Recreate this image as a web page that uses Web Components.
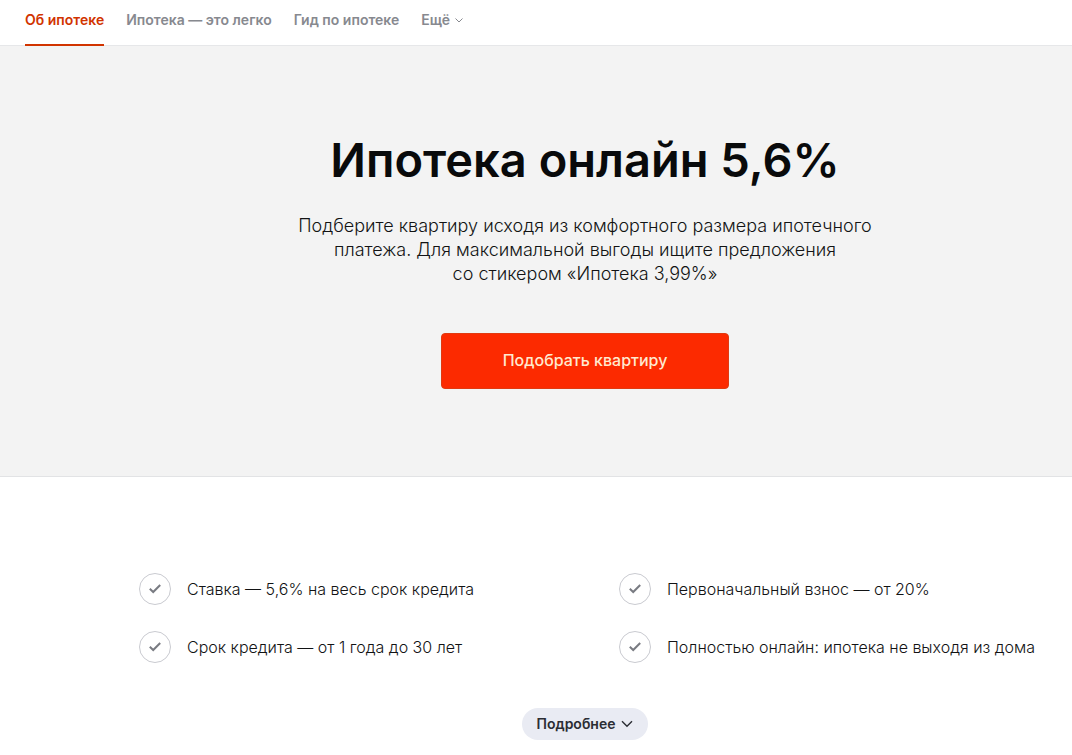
<!DOCTYPE html>
<html lang="ru">
<head>
    <meta charset="UTF-8">
    <meta name="viewport" content="width=device-width, initial-scale=1">
    <title>Ипотека онлайн</title>
    <style>
        body {
            margin: 0;
            background-color: #fff;
            color: #121314;
            font-family: Inter, "Liberation Sans", sans-serif;
            --side: 98px;
        }
    </style>
</head>

<body>
<page-nav>
    <nav-tab href="#about" active>Об ипотеке</nav-tab>
    <nav-tab href="#easy">Ипотека — это легко</nav-tab>
    <nav-tab href="#guide">Гид по ипотеке</nav-tab>
    <nav-more>Ещё</nav-more>
</page-nav>

<main>
    <promo-hero>
        <span slot="title">Ипотека онлайн 5,6%</span>
        Подберите квартиру исходя из комфортного размера ипотечного<br>
        платежа. Для максимальной выгоды ищите предложения<br>
        со стикером «Ипотека 3,99%»
        <span slot="action">Подобрать квартиру</span>
    </promo-hero>

    <benefit-list>
        <benefit-item>Ставка — 5,6% на весь срок кредита</benefit-item>
        <benefit-item>Первоначальный взнос — от 20%</benefit-item>
        <benefit-item>Срок кредита — от 1 года до 30 лет</benefit-item>
        <benefit-item>Полностью онлайн: ипотека не выходя из дома</benefit-item>
        <details-button slot="more">Подробнее</details-button>
    </benefit-list>
</main>

<script>


  class PageNav extends HTMLElement {
    constructor() {
      super();
      this.attachShadow({mode: "open"});
      this.shadowRoot.innerHTML = `
        <style>
          :host {
            display: block;
            border-bottom: 1px solid #e6e7e9;
          }
          nav {
            display: flex;
            gap: 22px;
            height: 45px;
            padding: 0 25px;
          }
        </style>
        <nav><slot></slot></nav>`;
    }
  }

  class NavTab extends HTMLElement {
    constructor() {
      super();
      this.attachShadow({mode: "open"});
      this.shadowRoot.innerHTML = `
        <style>
          :host { display: block; }
          a {
            display: block;
            box-sizing: border-box;
            height: 46px;
            padding-top: 10px;
            color: #87898f;
            font-size: 14px;
            font-weight: 600;
            line-height: 20px;
            white-space: nowrap;
            text-decoration: none;
          }
          :host([active]) a {
            color: #d13400;
            border-bottom: 2px solid #d13400;
          }
        </style>
        <a><slot></slot></a>`;
      this.shadowRoot.querySelector("a").setAttribute("href", this.getAttribute("href"));
    }
  }

  class NavMore extends HTMLElement {
    constructor() {
      super();
      this.attachShadow({mode: "open"});
      this.shadowRoot.innerHTML = `
        <style>
          :host { display: block; }
          button {
            display: flex;
            align-items: center;
            gap: 5px;
            margin: 0;
            padding: 10px 0 0;
            border: 0;
            background: none;
            color: #87898f;
            font: 600 14px/20px Inter, "Liberation Sans", sans-serif;
          }
        </style>
        <button type="button"><slot></slot>
          <svg width="8" height="6" viewBox="0 0 8 6" fill="none" stroke="currentColor" aria-hidden="true">
            <path d="M0.5 1.5L4 5l3.5-3.5"/>
          </svg>
        </button>`;
    }
  }

  class PromoHero extends HTMLElement {
    constructor() {
      super();
      this.attachShadow({mode: "open"});
      this.shadowRoot.innerHTML = `
        <style>
          :host {
            display: block;
            padding: 86px 0 87px var(--side);
            background-color: #f3f3f3;
            border-bottom: 1px solid #e2e3e5;
            text-align: center;
          }
          h1 {
            margin: 0;
            color: #090a0b;
            font-size: 47px;
            font-weight: 600;
            line-height: 56px;
          }
          p {
            margin: 26px 0 47px;
            font-size: 18px;
            font-weight: 300;
            line-height: 24px;
          }
          button {
            width: 288px;
            height: 56px;
            padding: 0 0 2px;
            border: 1px solid #e03a10;
            border-radius: 4px;
            background-color: #fc2a00;
            color: #ffe9cf;
            font: 500 16px/24px Inter, "Liberation Sans", sans-serif;
            vertical-align: top;
          }
        </style>
        <h1><slot name="title"></slot></h1>
        <p><slot></slot></p>
        <button type="button"><slot name="action"></slot></button>`;
    }
  }

  class BenefitList extends HTMLElement {
    constructor() {
      super();
      this.attachShadow({mode: "open"});
      this.shadowRoot.innerHTML = `
        <style>
          :host {
            display: block;
            padding: 96px 0 15px var(--side);
          }
          .grid {
            display: grid;
            grid-template-columns: repeat(2, minmax(0, 1fr));
            gap: 26px 68px;
            max-width: 892px;
            margin: 0 auto;
          }
          .more {
            display: flex;
            justify-content: center;
            margin-top: 45px;
          }
        </style>
        <div class="grid" role="list"><slot></slot></div>
        <div class="more"><slot name="more"></slot></div>`;
    }
  }

  class BenefitItem extends HTMLElement {
    constructor() {
      super();
      this.attachShadow({mode: "open"});
      this.shadowRoot.innerHTML = `
        <style>
          :host {
            display: flex;
            align-items: center;
            gap: 16px;
            font-size: 16px;
            font-weight: 300;
            line-height: 24px;
            white-space: nowrap;
          }
          svg { flex: none; }
        </style>
        <svg width="32" height="32" viewBox="0 0 32 32" fill="none" aria-hidden="true">
          <circle cx="16" cy="16" r="15.5" stroke="#c9cad0"/>
          <path d="M10.8 15.8l3.4 3.2 7-7" stroke="#797b82" stroke-width="2"/>
        </svg>
        <span><slot></slot></span>`;
      this.setAttribute("role", "listitem");
    }
  }

  class DetailsButton extends HTMLElement {
    constructor() {
      super();
      this.attachShadow({mode: "open"});
      this.shadowRoot.innerHTML = `
        <style>
          :host { display: block; }
          button {
            display: flex;
            align-items: center;
            gap: 6px;
            height: 32px;
            padding: 0 15px;
            border: 0;
            border-radius: 16px;
            background-color: #e9ebf3;
            color: #2b2d33;
            font: 600 14px/20px Inter, "Liberation Sans", sans-serif;
          }
        </style>
        <button type="button"><slot></slot>
          <svg width="12" height="8" viewBox="0 0 12 8" fill="none" stroke="currentColor" stroke-width="1.4" aria-hidden="true">
            <path d="M1 1.2l5 5 5-5"/>
          </svg>
        </button>`;
    }
  }

  customElements.define("page-nav", PageNav);
  customElements.define("nav-tab", NavTab);
  customElements.define("nav-more", NavMore);
  customElements.define("promo-hero", PromoHero);
  customElements.define("benefit-list", BenefitList);
  customElements.define("benefit-item", BenefitItem);
  customElements.define("details-button", DetailsButton);
</script>
</body>
</html>
